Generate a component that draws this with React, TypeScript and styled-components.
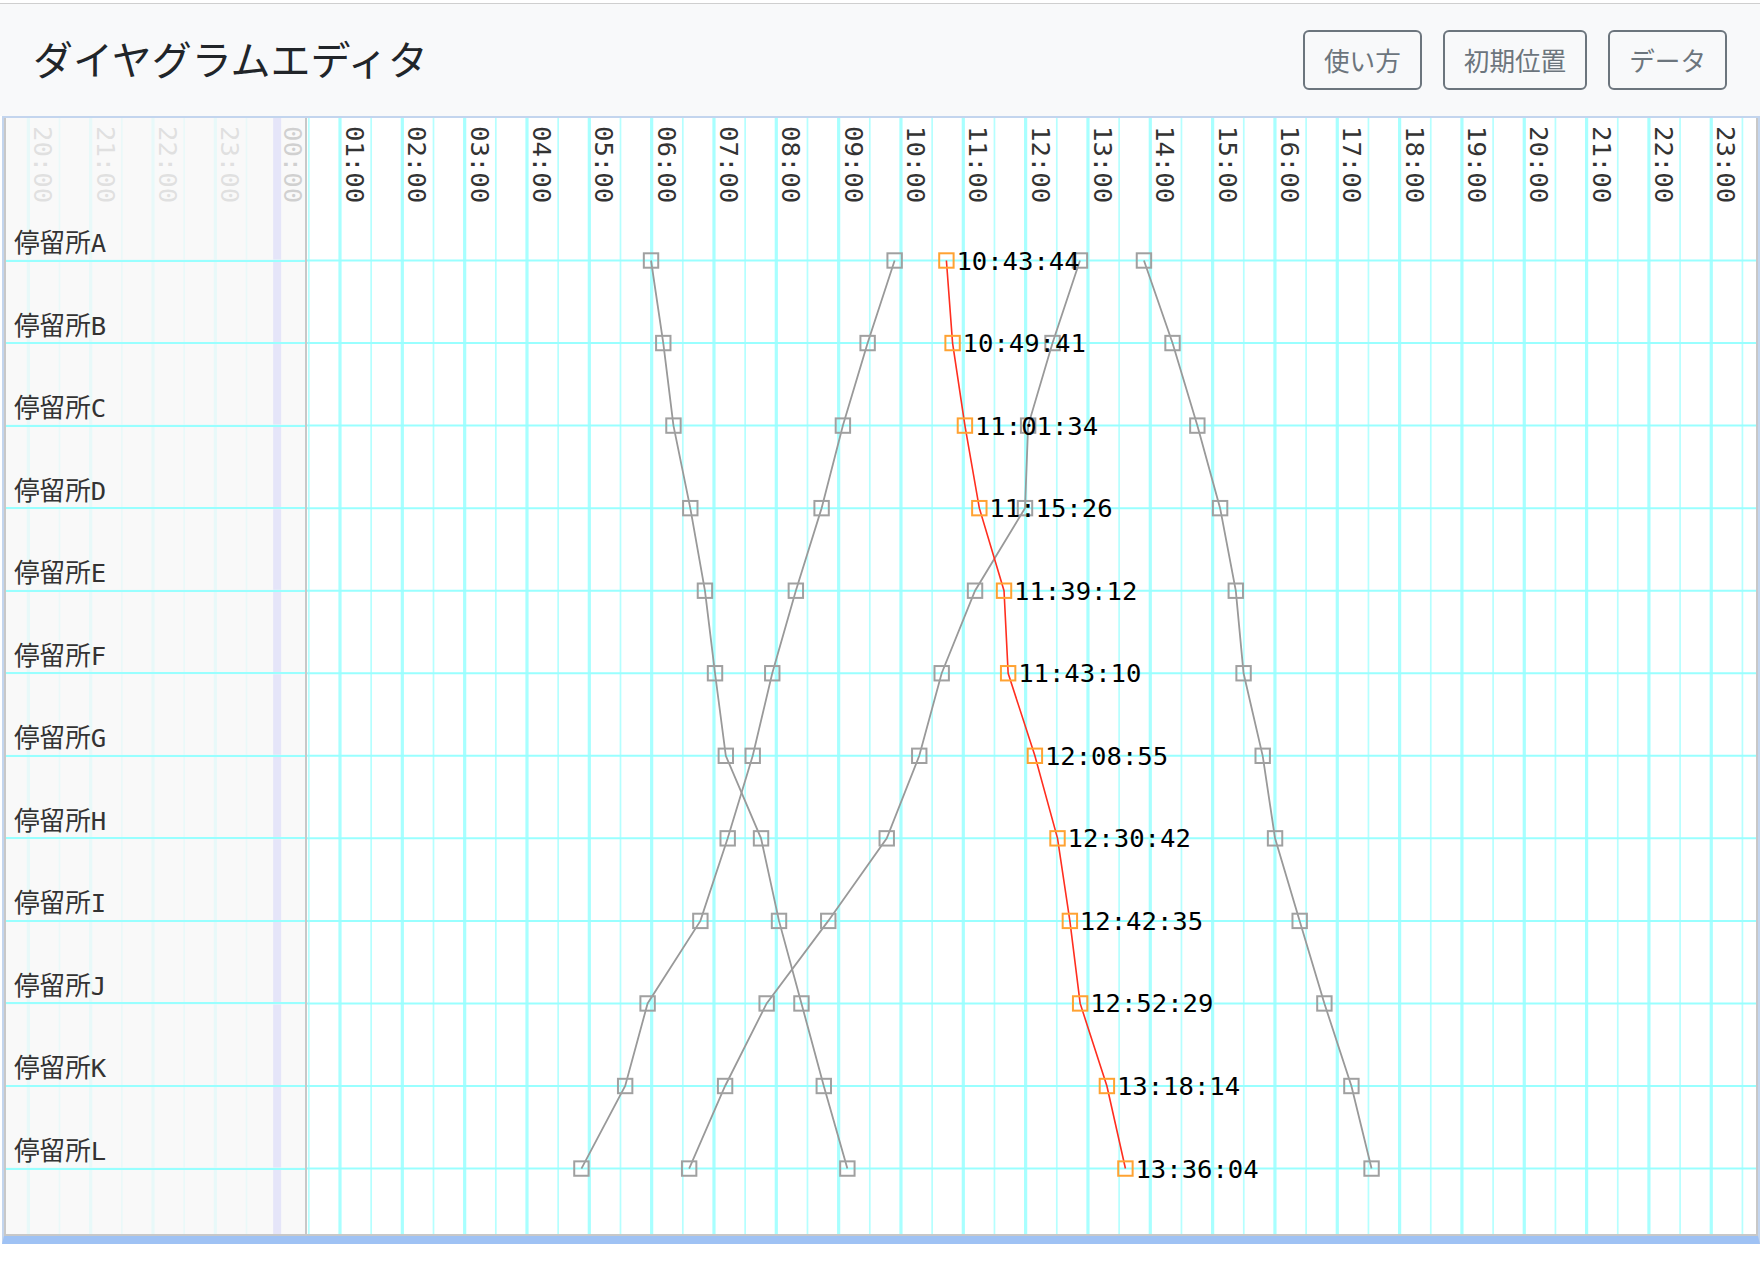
import React from "react";
import styled, { createGlobalStyle } from "styled-components";

const GlobalStyle = createGlobalStyle`
  html, body { margin: 0; padding: 0; background: #ffffff; }
  body {
    font-family: "Noto Sans CJK JP", "Noto Sans", sans-serif;
    color: #212529;
  }
  * { box-sizing: border-box; }
`;

const Page = styled.div`
  width: 1760px;
  padding-top: 3px;
`;

const Header = styled.header`
  height: 113px;
  border-top: 1px solid #cfcfcf;
  background: #f8f9fa;
  display: flex;
  align-items: center;
  justify-content: space-between;
  padding: 0 33px;
`;

const Title = styled.h1`
  margin: 0 0 4px 0;
  font-size: 40px;
  font-weight: 400;
  line-height: 1.2;
  color: #212529;
`;

const Actions = styled.div`
  display: flex;
  gap: 21px;
`;

const Button = styled.button`
  height: 60px;
  padding: 0 19px;
  border: 2px solid #6c757d;
  border-radius: 6px;
  background: transparent;
  color: #6c757d;
  font-family: "Noto Sans CJK JP", sans-serif;
  font-size: 25.6px;
  line-height: 1;
  cursor: pointer;
`;

const Frame = styled.div`
  margin-left: 2px;
  border: 2px solid #c3d5ee;
  border-bottom: 8px solid #9fc2f4;
  overflow: hidden;
`;

const Canvas = styled.div`
  position: relative;
  height: 1118px;
  border: 2px solid #c8c8c8;
  border-top: none;
`;

const Chart = styled.svg`
  display: block;
`;

const StopPanel = styled.div`
  position: absolute;
  top: 0;
  left: 0;
  bottom: 0;
  width: 301px;
  padding-top: 61px;
  background: rgba(248, 248, 248, 0.8);
  border-right: 2px solid #c8c8c8;
  display: flex;
  flex-direction: column;
`;

const StopRow = styled.div`
  height: 82.55px;
  flex: none;
  display: flex;
  align-items: flex-end;
  padding: 0 0 3px 8px;
  border-bottom: 2px solid #99ffff;
  font-family: "DejaVu Sans Mono", "Noto Sans CJK JP", monospace;
  font-size: 25.6px;
  line-height: 1;
  color: #333333;
`;

const HourLine = styled.line<{ $major: boolean }>`
  stroke: ${(p) => (p.$major ? "#a8ffff" : "#b5ffff")};
  stroke-width: ${(p) => (p.$major ? 3.2 : 1.7)};
`;

const MidnightBand = styled.rect`
  fill: #9c9cff;
`;

const RowLine = styled.line`
  stroke: #99ffff;
  stroke-width: 2;
`;

const TimeLabel = styled.text<{ $prev: boolean }>`
  font-family: "DejaVu Sans Mono", "Liberation Mono", monospace;
  font-size: 25.6px;
  fill: ${(p) => (p.$prev ? "#808080" : "#333333")};
`;

const TrainPath = styled.polyline<{ $active: boolean }>`
  fill: none;
  stroke: ${(p) => (p.$active ? "#ff2e1f" : "#999999")};
  stroke-width: ${(p) => (p.$active ? 1.6 : 1.8)};
`;

const StopMark = styled.rect<{ $active: boolean }>`
  fill: none;
  stroke: ${(p) => (p.$active ? "#ffa232" : "#a0a0a0")};
  stroke-width: 2;
`;

const PassLabel = styled.text`
  font-family: "DejaVu Sans Mono", "Liberation Mono", monospace;
  font-size: 25.6px;
  fill: #000000;
`;

const WIDTH = 1750;
const HEIGHT = 1116;
const HOUR_W = 62.33;
const X0 = 271.67; // 00:00
const ROW_Y0 = 142.5;
const ROW_H = 82.55;

const stops = "ABCDEFGHIJKL".split("").map((c) => `停留所${c}`);

const toMin = (s: string) => {
  const [h, m, sec] = s.split(":").map(Number);
  return h * 60 + m + (sec || 0) / 60;
};
const xOf = (min: number) => X0 + (min / 60) * HOUR_W;
const yOf = (i: number) => ROW_Y0 + i * ROW_H;

const trains: { id: string; times: string[]; active?: boolean }[] = [
  {
    id: "d1",
    times: ["5:59:24", "6:11:12", "6:21:00", "6:37:12", "6:51:18", "7:01:00", "7:11:24", "7:45:18", "8:02:36", "8:24:12", "8:45:42", "9:08:24"],
  },
  {
    id: "u1",
    times: ["9:53:54", "9:27:54", "9:04:06", "8:43:36", "8:18:48", "7:56:06", "7:37:18", "7:13:12", "6:46:54", "5:56:06", "5:34:30", "4:52:24"],
  },
  {
    id: "u2",
    times: ["12:52:18", "12:25:54", "12:02:24", "11:59:24", "11:11:18", "10:39:12", "10:17:36", "9:46:18", "8:50:00", "7:50:42", "7:10:42", "6:36:06"],
  },
  {
    id: "d2",
    times: ["13:53:54", "14:21:24", "14:45:18", "15:07:12", "15:22:18", "15:29:48", "15:48:12", "16:00:06", "16:23:48", "16:47:36", "17:13:36", "17:33:00"],
  },
  {
    id: "red",
    active: true,
    times: ["10:43:44", "10:49:41", "11:01:34", "11:15:26", "11:39:12", "11:43:10", "12:08:55", "12:30:42", "12:42:35", "12:52:29", "13:18:14", "13:36:04"],
  },
];

const hours = Array.from({ length: 28 }, (_, i) => i - 4); // -4 .. 23
const halves = Array.from({ length: 29 }, (_, i) => i - 5); // -5 .. 23

export default function App() {
  return (
    <>
      <GlobalStyle />
      <Page>
        <Header>
          <Title>ダイヤグラムエディタ</Title>
          <Actions>
            <Button>使い方</Button>
            <Button>初期位置</Button>
            <Button>データ</Button>
          </Actions>
        </Header>
        <Frame>
          <Canvas>
            <Chart width={WIDTH} height={HEIGHT} viewBox={`0 0 ${WIDTH} ${HEIGHT}`}>
              {halves.map((h) => {
                const x = xOf((h + 0.5) * 60);
                return <HourLine key={`h${h}`} $major={false} x1={x} x2={x} y1={0} y2={HEIGHT} />;
              })}
              {hours
                .filter((h) => h !== 0)
                .map((h) => {
                  const x = xOf(h * 60);
                  return <HourLine key={`H${h}`} $major x1={x} x2={x} y1={0} y2={HEIGHT} />;
                })}
              <MidnightBand x={X0 - 4.5} y={0} width={8} height={HEIGHT} />
              {stops.map((s, i) => (
                <RowLine key={s} x1={0} x2={WIDTH} y1={yOf(i)} y2={yOf(i)} />
              ))}
              {hours.map((h) => {
                const x = xOf(h * 60) + 6;
                const label = `${String((h + 24) % 24).padStart(2, "0")}:00`;
                return (
                  <TimeLabel key={`t${h}`} $prev={h < 0} transform={`translate(${x}, 8) rotate(90)`}>
                    {label}
                  </TimeLabel>
                );
              })}
              {trains.map((t) => {
                const pts = t.times.map((s, i) => [xOf(toMin(s)), yOf(i)] as const);
                return (
                  <g key={t.id}>
                    <TrainPath $active={!!t.active} points={pts.map((p) => p.join(",")).join(" ")} />
                    {pts.map(([x, y], i) => (
                      <StopMark key={i} $active={!!t.active} x={x - 7.2} y={y - 7.2} width={14.4} height={14.4} />
                    ))}
                    {t.active &&
                      pts.map(([x, y], i) => (
                        <PassLabel key={`l${i}`} x={x + 10} y={y + 9}>
                          {t.times[i]}
                        </PassLabel>
                      ))}
                  </g>
                );
              })}
            </Chart>
            <StopPanel>
              {stops.map((s) => (
                <StopRow key={s}>{s}</StopRow>
              ))}
            </StopPanel>
          </Canvas>
        </Frame>
      </Page>
    </>
  );
}
